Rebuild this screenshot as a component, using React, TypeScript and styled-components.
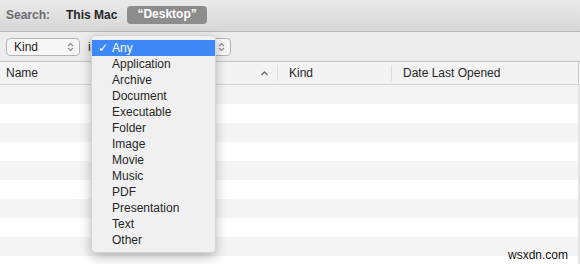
import React from "react";
import styled, { createGlobalStyle } from "styled-components";

const Global = createGlobalStyle`
  html, body { margin: 0; padding: 0; background: #ffffff; }
  body { font-family: "Liberation Sans", Arial, sans-serif; -webkit-font-smoothing: antialiased; }
  * { box-sizing: border-box; }
`;

const Window = styled.div`
  position: relative;
  width: 580px;
  height: 264px;
  overflow: hidden;
  background: #ffffff;
  font-size: 12px;
  color: #262626;
`;

const SearchBar = styled.div`
  height: 32px;
  display: flex;
  align-items: center;
  padding: 0 0 1px 6px;
  background: linear-gradient(#e9e9e9, #d7d7d7);
  border-bottom: 1px solid #b8b8b8;
`;

const SearchLabel = styled.span`
  font-weight: bold;
  color: #6b6b6b;
  margin-right: 16px;
`;

const Scope = styled.span<{ $active?: boolean }>`
  font-weight: bold;
  color: ${(p) => (p.$active ? "#ffffff" : "#262626")};
  background: ${(p) => (p.$active ? "#8c8c8c" : "transparent")};
  border-radius: 4px;
  padding: ${(p) => (p.$active ? "1px 10px 2px 10px" : "0")};
  margin-right: ${(p) => (p.$active ? "0" : "10px")};
  line-height: 15px;
`;

const FilterBar = styled.div`
  height: 30px;
  display: flex;
  align-items: center;
  padding: 0 6px;
  gap: 8px;
  background: #ececec;
  border-bottom: 1px solid #c6c6c6;
`;

const Popup = styled.div<{ $width: number }>`
  width: ${(p) => p.$width}px;
  height: 18px;
  display: flex;
  align-items: center;
  justify-content: space-between;
  padding: 0 5px 0 7px;
  background: #f7f7f7;
  border: 1px solid #b3b3b3;
  border-radius: 4px;
  color: #262626;
`;

const IsText = styled.span`
  color: #262626;
`;

const Chevrons = () => (
  <svg width="7" height="10" viewBox="0 0 7 10">
    <path d="M1 4 L3.5 1.5 L6 4 M1 6 L3.5 8.5 L6 6" fill="none" stroke="#8a8a8a" strokeWidth="1.1" />
  </svg>
);

const Header = styled.div`
  height: 23px;
  display: grid;
  grid-template-columns: 277px 114px 187px 1fr;
  background: #f3f3f3;
  border-bottom: 1px solid #d4d4d4;
`;

const HeaderCell = styled.div<{ $sep?: boolean }>`
  display: flex;
  align-items: center;
  justify-content: space-between;
  padding: 0 8px 0 ${(p) => (p.$sep ? "11px" : "6px")};
  border-left: ${(p) => (p.$sep ? "1px solid #dcdcdc" : "none")};
  margin: ${(p) => (p.$sep ? "3px 0" : "0")};
  color: #262626;
`;

const EdgeCell = styled.div`
  border-left: 1px solid #c9c9c9;
`;

const SortArrow = () => (
  <svg width="9" height="6" viewBox="0 0 9 6">
    <path d="M1.5 5 L4.5 2 L7.5 5" fill="none" stroke="#6a6a6a" strokeWidth="1.3" />
  </svg>
);

const Rows = styled.div`
  display: flex;
  flex-direction: column;
`;

const Row = styled.div<{ $odd: boolean }>`
  height: 19px;
  background: ${(p) => (p.$odd ? "#f4f4f4" : "#ffffff")};
  border-right: 2px solid #e4e4e4;
`;

const Menu = styled.div`
  position: absolute;
  left: 91px;
  top: 35px;
  width: 125px;
  padding: 4px 0;
  background: rgba(240, 240, 240, 0.98);
  border-radius: 5px;
  border: 1px solid rgba(0, 0, 0, 0.12);
  box-shadow: 0 4px 12px rgba(0, 0, 0, 0.28);
  display: flex;
  flex-direction: column;
`;

const MenuItem = styled.div<{ $selected?: boolean }>`
  height: 16px;
  display: flex;
  align-items: center;
  padding-left: 20px;
  position: relative;
  background: ${(p) => (p.$selected ? "#3d88f6" : "transparent")};
  color: ${(p) => (p.$selected ? "#ffffff" : "#262626")};
  font-size: 12px;
`;

const Check = styled.span`
  position: absolute;
  left: 6px;
  top: 1px;
  font-size: 12px;
  font-weight: bold;
  font-family: "DejaVu Sans", sans-serif;
`;

const Watermark = styled.div`
  position: absolute;
  right: 12px;
  bottom: 2px;
  font-size: 12px;
  color: #111111;
  font-family: "Liberation Sans", Arial, sans-serif;
`;

const kinds = [
  "Any",
  "Application",
  "Archive",
  "Document",
  "Executable",
  "Folder",
  "Image",
  "Movie",
  "Music",
  "PDF",
  "Presentation",
  "Text",
  "Other",
];

export default function App() {
  return (
    <Window>
      <Global />
      <SearchBar>
        <SearchLabel>Search:</SearchLabel>
        <Scope>This Mac</Scope>
        <Scope $active>“Desktop”</Scope>
      </SearchBar>
      <FilterBar>
        <Popup $width={74}>
          <span>Kind</span>
          <Chevrons />
        </Popup>
        <IsText>is</IsText>
        <Popup $width={126}>
          <span>Any</span>
          <Chevrons />
        </Popup>
      </FilterBar>
      <Header>
        <HeaderCell>
          <span>Name</span>
          <SortArrow />
        </HeaderCell>
        <HeaderCell $sep>Kind</HeaderCell>
        <HeaderCell $sep>Date Last Opened</HeaderCell>
        <EdgeCell />
      </Header>
      <Rows>
        {Array.from({ length: 10 }).map((_, i) => (
          <Row key={i} $odd={i % 2 === 0} />
        ))}
      </Rows>
      <Menu>
        {kinds.map((k, i) => (
          <MenuItem key={k} $selected={i === 0}>
            {i === 0 && <Check>✓</Check>}
            {k}
          </MenuItem>
        ))}
      </Menu>
      <Watermark>wsxdn.com</Watermark>
    </Window>
  );
}
